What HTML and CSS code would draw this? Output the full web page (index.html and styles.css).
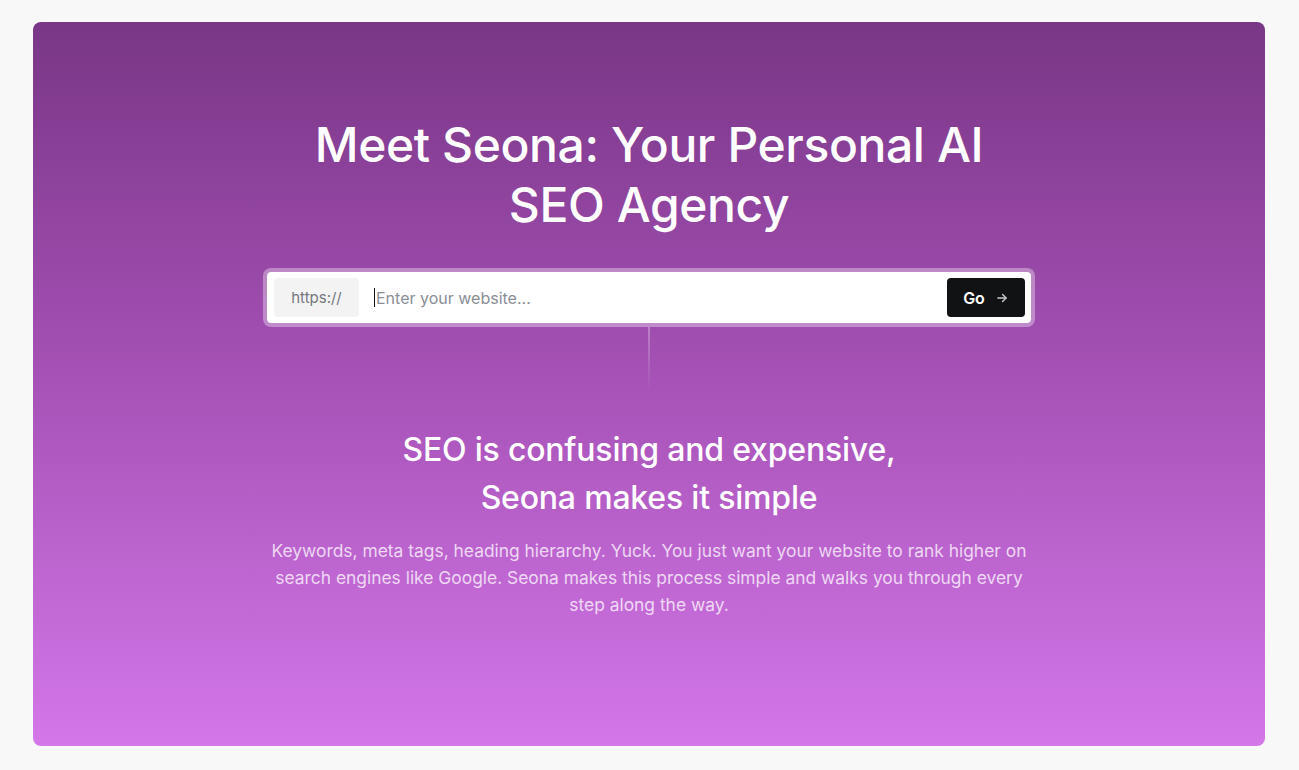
FILE: index.html
```html
<!DOCTYPE html>
<html lang="en">

<head>
        <meta charset="UTF-8">
        <meta name="viewport" content="width=device-width, initial-scale=1.0">
        <title>Seona - Your Personal AI SEO Agency</title>
        <link rel="stylesheet" href="styles.css">
</head>

<body>
        <section class="hero">
                <h1 class="hero_title">Meet Seona: Your Personal AI<br>SEO Agency</h1>

                <form class="url_form" onsubmit="return false;">
                        <span class="url_prefix">https://</span>
                        <span class="caret"></span>
                        <input class="url_input" type="text" placeholder="Enter your website...">
                        <button class="go_btn" type="submit">Go
                                <svg width="14" height="14" viewBox="0 0 24 24" fill="none" stroke="currentColor"
                                        stroke-width="2.4" stroke-linecap="round" stroke-linejoin="round">
                                        <path d="M5 12h14" />
                                        <path d="M13 6l6 6-6 6" />
                                </svg>
                        </button>
                </form>

                <div class="connector"></div>

                <h2 class="sub_title">SEO is confusing and expensive,<br>Seona makes it simple</h2>
                <p class="sub_text">Keywords, meta tags, heading hierarchy. Yuck. You just want your website to rank
                        higher on search engines like Google. Seona makes this process simple and walks you through
                        every step along the way.</p>
        </section>
</body>

</html>
```

FILE: styles.css
```css
* {
        box-sizing: border-box;
}

body {
        margin: 0;
        padding: 22px 34px 24px 33px;
        background-color: #f8f8f8;
        font-family: Inter, "Open Sans", sans-serif;
}

.hero {
        height: 724px;
        border-radius: 8px;
        background: linear-gradient(180deg, #793686 0%, #a24fb2 45%, #d477e9 100%);
        display: flex;
        flex-direction: column;
        align-items: center;
        padding-top: 93px;
        color: white;
        text-align: center;
}

.hero_title {
        margin: 0;
        font-size: 48px;
        font-weight: 500;
        line-height: 60px;
        letter-spacing: -0.4px;
}

.url_form {
        margin-top: 33px;
        width: 772px;
        height: 59px;
        display: flex;
        align-items: center;
        padding: 0 6px 0 7px;
        background-color: white;
        border: 4px solid rgba(255, 255, 255, 0.35);
        border-radius: 8px;
        background-clip: padding-box;
}

.url_prefix {
        background-color: #f3f3f4;
        color: #74777d;
        font-size: 15px;
        width: 85px;
        height: 39px;
        line-height: 39px;
        border-radius: 4px;
}

.caret {
        width: 1px;
        height: 19px;
        margin-left: 15px;
        background-color: #111;
}

.url_input {
        flex: 1;
        border: none;
        outline: none;
        font-family: inherit;
        font-size: 16px;
        color: #111;
        padding: 0 0 0 1px;
}

.url_input::placeholder {
        color: #8a8e96;
}

.go_btn {
        background-color: #111214;
        color: white;
        border: none;
        border-radius: 4px;
        height: 39px;
        width: 78px;
        font-family: inherit;
        font-size: 16px;
        font-weight: 600;
        display: flex;
        align-items: center;
        justify-content: center;
        gap: 10px;
        cursor: pointer;
}

.go_btn svg {
        color: #c9cacd;
}

.connector {
        width: 2px;
        height: 64px;
        background: linear-gradient(180deg, rgba(255, 255, 255, 0.3), rgba(255, 255, 255, 0));
}

.sub_title {
        margin: 35px 0 0;
        font-size: 32px;
        font-weight: 500;
        line-height: 48px;
        letter-spacing: -0.2px;
}

.sub_text {
        margin: 15px 0 0;
        max-width: 760px;
        font-size: 17.4px;
        line-height: 27px;
        color: rgba(255, 255, 255, 0.75);
}
```
